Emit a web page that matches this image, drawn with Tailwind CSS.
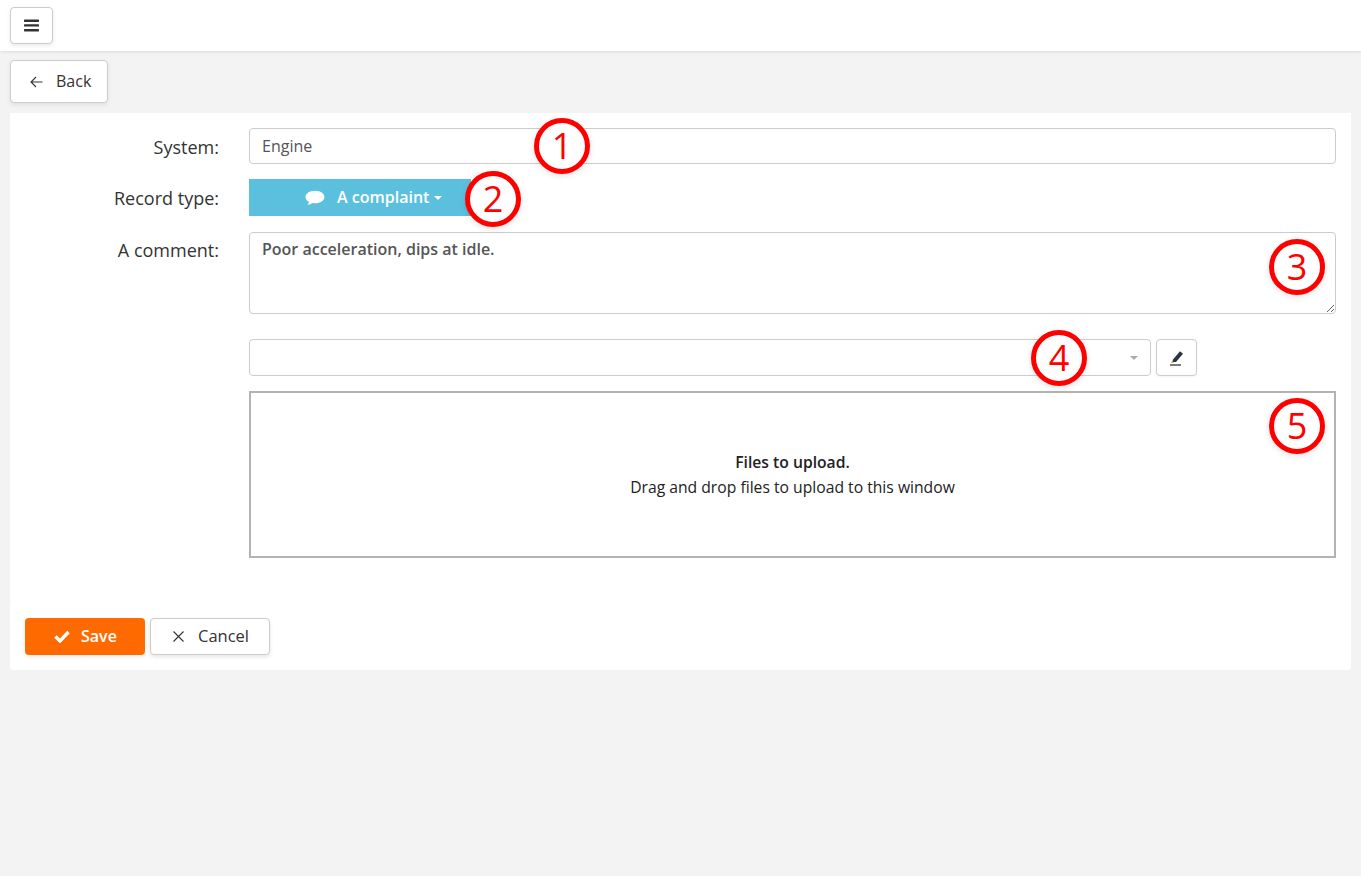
<!DOCTYPE html>
<html lang="en">
<head>
<meta charset="utf-8">
<title>Record</title>
<script src="https://cdn.jsdelivr.net/npm/@tailwindcss/browser@4"></script>
</head>
<body class="bg-[#f3f3f3] font-['Open_Sans',sans-serif] text-[16px] text-[#333] relative h-[876px] overflow-hidden">
<header class="h-[51px] bg-white shadow-[0_1px_3px_rgba(0,0,0,0.1)] pl-[10px] pt-[7px]">
  <button class="w-[43px] h-[37px] bg-white border border-[#ccc] rounded-[4px] flex items-center justify-center shadow-[0_2px_4px_rgba(0,0,0,0.08)]">
    <svg width="15" height="13" viewBox="0 0 15 13" fill="#333"><rect y="0.5" width="15" height="2.4" rx="0.6"/><rect y="5.2" width="15" height="2.4" rx="0.6"/><rect y="10" width="15" height="2.4" rx="0.6"/></svg>
  </button>
</header>
<div class="pl-[10px] pt-[9px]">
  <button class="w-[98px] h-[43px] bg-white border border-[#ccc] rounded-[4px] flex items-center pl-[19px] gap-[13px] pb-[2px] shadow-[0_2px_4px_rgba(0,0,0,0.08)]">
    <svg class="mt-[2px]" width="13" height="12" viewBox="0 0 13 12" fill="none" stroke="#333" stroke-width="1.100"><path d="M12.500 6H1M6 1 1 6l5 5"/></svg>
    <span>Back</span>
  </button>
</div>
<main class="mx-[10px] mt-[10px] w-[1341px] h-[557px] flex flex-col">
  <div class="flex flex-col h-[489px] pt-[15px] pr-[15px] bg-white rounded-bl-[2px]">
    <div class="flex h-[36px] items-center gap-[30px]">
      <label class="w-[209px] text-right text-[18px] leading-[36px] pt-[2px]">System:</label>
      <div class="w-[1087px] h-[36px] border border-[#ccc] rounded-[4px] pl-[12px] leading-[34px] text-[#555]">Engine</div>
    </div>
    <div class="flex h-[37px] mt-[15px] items-center gap-[30px]">
      <label class="w-[209px] text-right text-[18px] pt-[2px]">Record type:</label>
      <button class="w-[222px] h-[37px] bg-[#5bc0de] text-white font-semibold flex items-center pl-[56px] pb-[2px]">
        <svg class="mt-[2px]" width="20" height="16" viewBox="0 0 19 15" fill="#fff"><path d="M9.500 0.500C4.500 0.500 0.500 3.200 0.500 6.500c0 1.900 1.300 3.600 3.300 4.700-.2 1.200-.9 2.200-1.600 3 1.800-.2 3.500-1 4.700-2 .8.200 1.700.300 2.600.300 5 0 9-2.700 9-6S14.500.500 9.500.500z"/></svg>
        <span class="ml-[12px]">A complaint</span>
        <span class="ml-[5px] mt-[3px] w-0 h-0 border-x-[4px] border-x-transparent border-t-[4px] border-t-white"></span>
      </button>
    </div>
    <div class="flex mt-[16px] gap-[30px]">
      <label class="w-[209px] text-right text-[18px] leading-[36px]">A comment:</label>
      <textarea class="w-[1087px] h-[82px] border border-[#ccc] rounded-[4px] px-[12px] py-[4px] text-[#555] font-semibold leading-[24px] outline-none">Poor acceleration, dips at idle.</textarea>
    </div>
    <div class="flex mt-[25px] ml-[239px] gap-[5px]">
      <div class="w-[902px] h-[37px] border border-[#ccc] rounded-[4px] flex items-center justify-end pr-[12px]">
        <span class="w-0 h-0 border-x-[4px] border-x-transparent border-t-[4px] border-t-[#aaa]"></span>
      </div>
      <button class="w-[41px] h-[37px] border border-[#ccc] rounded-[4px] bg-white flex items-center justify-center shadow-[0_1px_2px_rgba(0,0,0,0.05)]">
        <svg width="15" height="16" viewBox="0 0 15 16"><path d="M4 9.500 11 1.200l3 2.500-7 8.300H3.500z" fill="#2a3340"/><path d="M3.300 10.500 2 13h2.700z" fill="#e0a040"/><path d="M1 15h11" stroke="#222" stroke-width="1.200"/></svg>
      </button>
    </div>
    <div class="w-[1087px] h-[167px] mt-[15px] ml-[239px] border-2 border-[#b3b3b3] flex flex-col items-center justify-center text-[15.700px] leading-[25px] text-[#222]">
      <strong class="font-semibold">Files to upload.</strong>
      <span>Drag and drop files to upload to this window</span>
    </div>
  </div>
  <div class="flex-1 flex gap-[5px] pl-[15px] pt-[16px] bg-white rounded-b-[4px] rounded-tl-[2px]">
    <button class="w-[120px] h-[37px] bg-[#ff6a00] rounded-[4px] text-white font-semibold flex items-center pl-[29px] gap-[11px] pb-[2px] shadow-[0_2px_4px_rgba(0,0,0,0.08)]">
      <svg class="mt-[2px]" width="16" height="13" viewBox="0 0 16 13" fill="none" stroke="#fff" stroke-width="3.400"><path d="M1.500 6.500 6 11 14.500 2"/></svg>
      <span>Save</span>
    </button>
    <button class="w-[120px] h-[37px] bg-white border border-[#ccc] rounded-[4px] text-[16.500px] flex items-center pl-[22px] gap-[14px] shadow-[0_2px_4px_rgba(0,0,0,0.1)]">
      <svg width="11" height="11" viewBox="0 0 11 11" fill="none" stroke="#333" stroke-width="1.100"><path d="M.5.500l10 10M10.500.500l-10 10"/></svg>
      <span>Cancel</span>
    </button>
  </div>
</main>
<div class="absolute left-[534px] top-[118px] w-[56px] h-[56px] rounded-full bg-white border-[5px] border-[#f00] text-[#f00] text-[36px] font-medium flex items-center justify-center shadow-[0_2px_6px_rgba(0,0,0,0.12)]">1</div>
<div class="absolute left-[465px] top-[171px] w-[56px] h-[56px] rounded-full bg-white border-[5px] border-[#f00] text-[#f00] text-[36px] font-medium flex items-center justify-center shadow-[0_2px_6px_rgba(0,0,0,0.12)]">2</div>
<div class="absolute left-[1269px] top-[239px] w-[56px] h-[56px] rounded-full bg-white border-[5px] border-[#f00] text-[#f00] text-[36px] font-medium flex items-center justify-center shadow-[0_2px_6px_rgba(0,0,0,0.12)]">3</div>
<div class="absolute left-[1031px] top-[330px] w-[56px] h-[56px] rounded-full bg-white border-[5px] border-[#f00] text-[#f00] text-[36px] font-medium flex items-center justify-center shadow-[0_2px_6px_rgba(0,0,0,0.12)]">4</div>
<div class="absolute left-[1269px] top-[398px] w-[56px] h-[56px] rounded-full bg-white border-[5px] border-[#f00] text-[#f00] text-[36px] font-medium flex items-center justify-center shadow-[0_2px_6px_rgba(0,0,0,0.12)]">5</div>
</body>
</html>
